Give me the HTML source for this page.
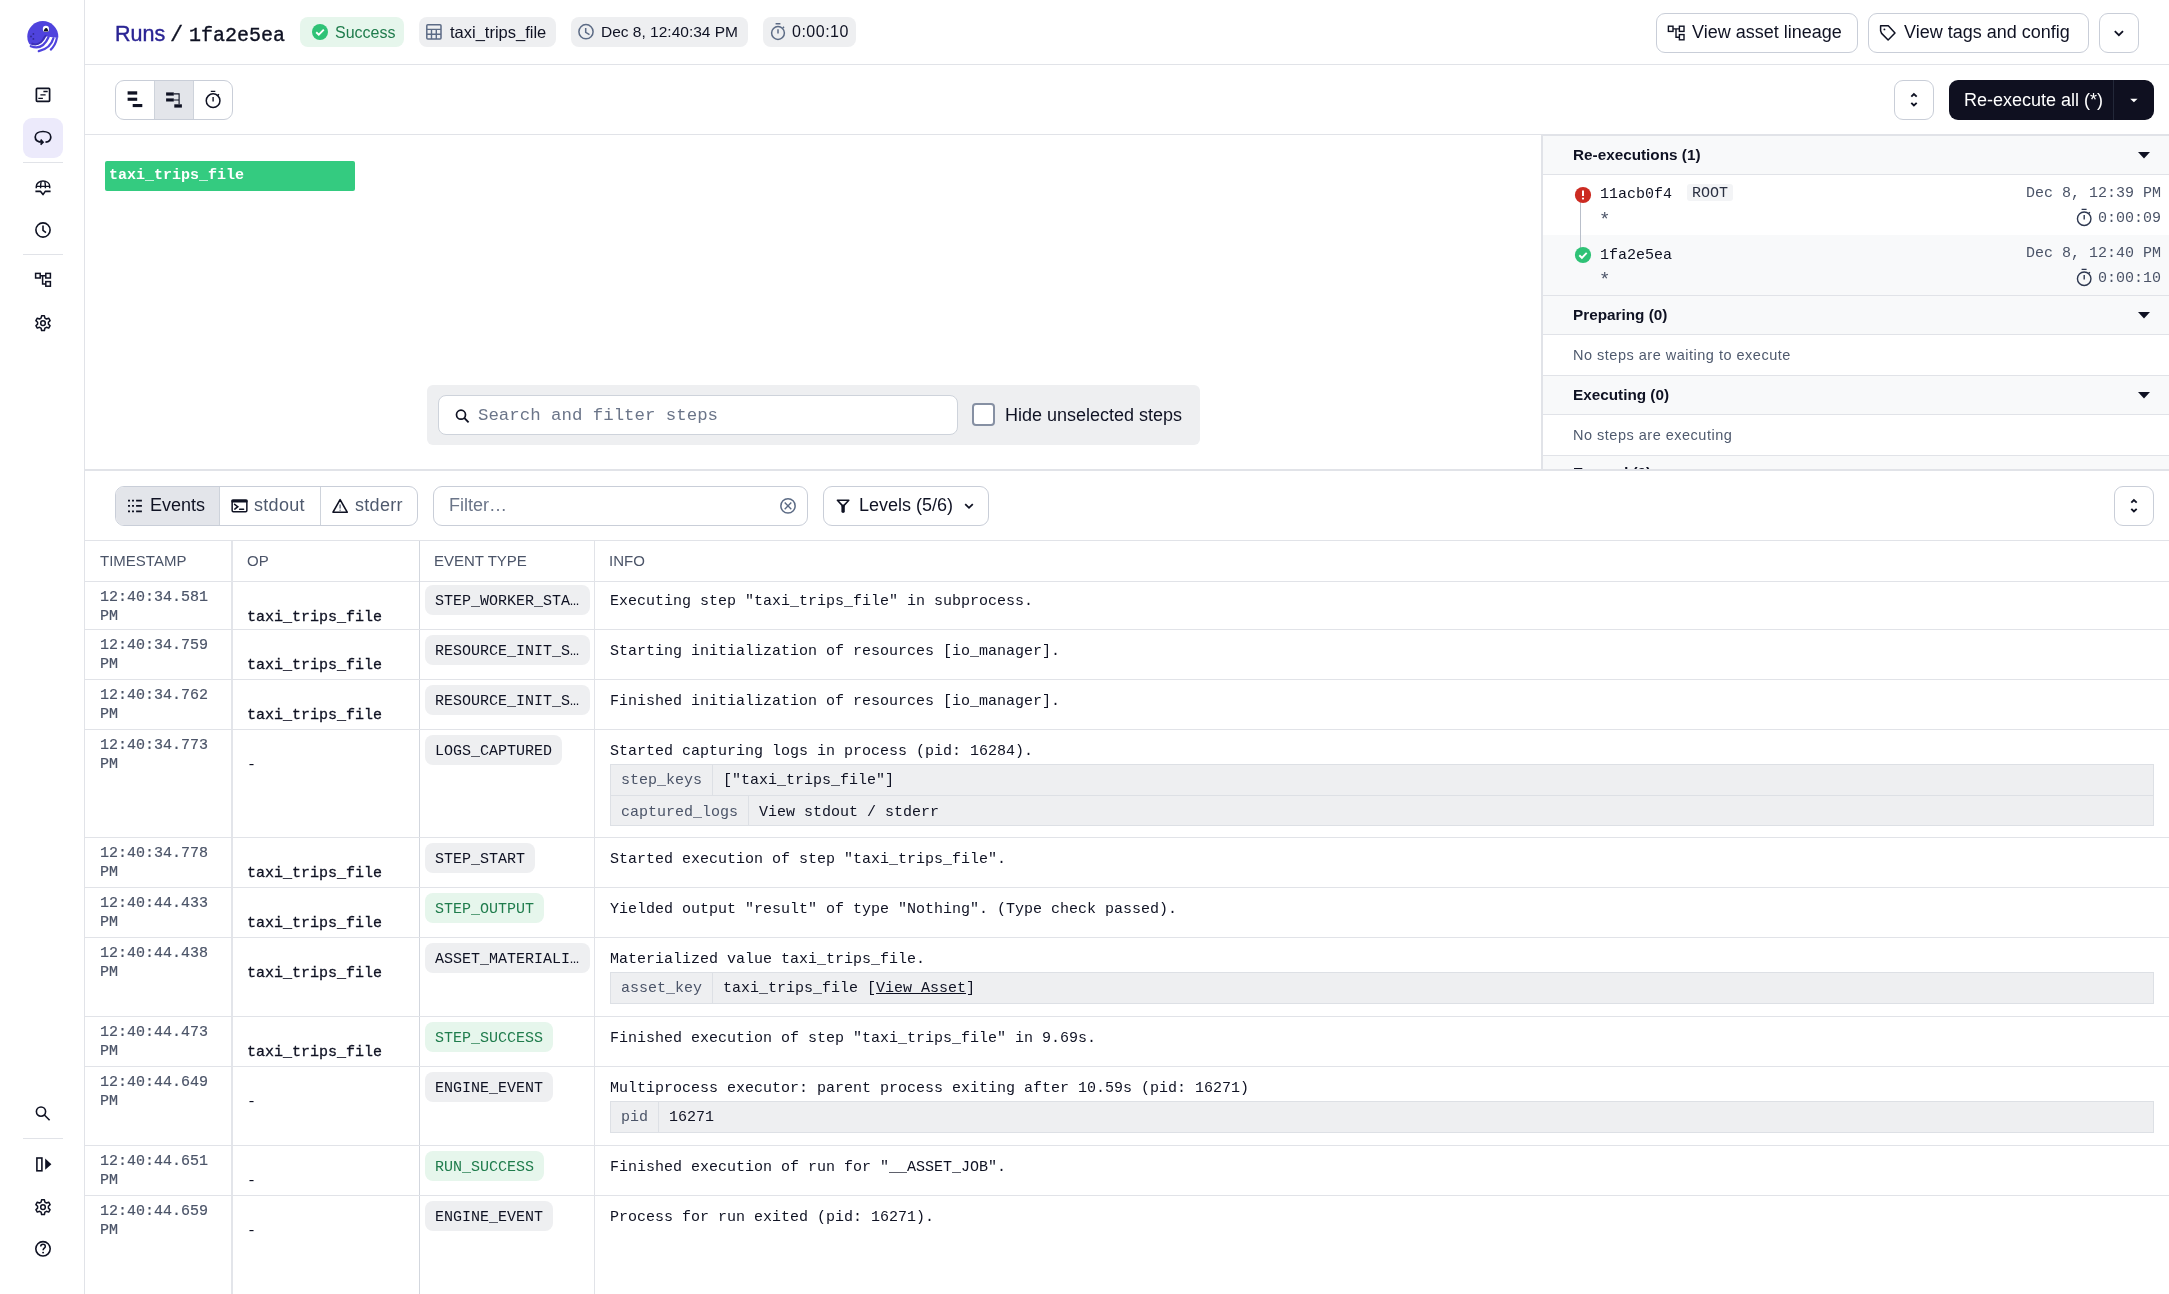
<!DOCTYPE html>
<html><head><meta charset="utf-8"><style>
*{box-sizing:border-box;margin:0;padding:0}
html,body{width:2169px;height:1294px;overflow:hidden;background:#fff;-webkit-font-smoothing:antialiased;font-family:"Liberation Sans",sans-serif;color:#0F1223}
#root{position:absolute;left:0;top:0;width:2169px;height:1294px;overflow:hidden;background:#fff;will-change:transform}
.abs{position:absolute}
.txt{position:absolute;white-space:nowrap}
.mono{font-family:"Liberation Mono",monospace}
.ic{position:absolute;display:block;overflow:visible}
#nav{position:absolute;left:0;top:0;width:85px;height:1294px;border-right:1px solid #E1E3E8;background:#fff}
.navdiv{position:absolute;left:23px;width:40px;height:1px;background:#E1E3E8}
.chip{position:absolute;top:17px;height:30px;border-radius:8px;background:#EEEFF1}
.btn{position:absolute;height:40px;border:1px solid #C9CED8;border-radius:9px;background:#fff}
.tag{position:absolute;left:425px;height:30px;max-width:165px;border-radius:8px;padding:3px 10px 0 10px;font-size:15px;line-height:27px;white-space:nowrap;overflow:hidden;text-overflow:ellipsis}
.meta{position:absolute;left:610px;width:1544px;background:#EEEFF1;border:1px solid #DDE0E5}
.mrow{display:flex;height:30px;border-top:1px solid #DDE0E5}
.mrow:first-child{border-top:none;height:30px}
.mrow+.mrow .mk,.mrow+.mrow .mv{padding-top:2px}
.mk{font-family:"Liberation Mono",monospace;font-size:15px;line-height:30px;padding:1px 10px 0 10px;color:#4B5468;border-right:1px solid #DDE0E5;white-space:nowrap}
.mv{font-family:"Liberation Mono",monospace;font-size:15px;line-height:30px;padding:1px 10px 0 10px;color:#0F1223;white-space:nowrap}
</style></head><body><div id="root">
<div id="nav">
<div class="abs" style="left:22px;top:16px;width:42px;height:42px"><svg width="42" height="42" viewBox="0 0 42 42">
      <circle cx="20.8" cy="20.6" r="15.5" fill="#4F43DD"/>
      <path d="M9.5 27.6 Q17.5 31 21.8 22.5 Q22.8 20 24.6 19.6" fill="none" stroke="#3A2FB8" stroke-width="2.2"/>
      <path d="M0 26 L8.2 28.4 Q18.5 32.6 24.3 20.6 Q30 21.5 37 22 L42 22 L42 42 L0 42 Z" fill="#fff"/>
      <path d="M8.8 30.2 Q20.5 34.8 26.5 21.3" fill="none" stroke="#4F43DD" stroke-width="2.3" stroke-linecap="round"/>
      <path d="M16.8 35.2 Q28.5 32.6 31.4 22.3" fill="none" stroke="#4F43DD" stroke-width="2.3" stroke-linecap="round"/>
      <path d="M28.8 33.6 Q33.6 29 34.8 22.4" fill="none" stroke="#4F43DD" stroke-width="2.2" stroke-linecap="round"/>
      <ellipse cx="23.9" cy="12.9" rx="3.1" ry="3.2" fill="#fff"/>
      <path d="M21.6 15.6 Q22.4 11.8 24.2 11.9 Q25.9 12.1 26.2 15.4 Z" fill="#0F1223"/>
      <circle cx="11.4" cy="17.9" r="0.9" fill="#2E2790"/>
      <circle cx="9" cy="20.5" r="0.9" fill="#2E2790"/>
      <circle cx="11.4" cy="22.9" r="0.9" fill="#2E2790"/>
    </svg></div>
<svg class="ic" style="left:34px;top:86px" width="18" height="18" viewBox="0 0 18 18" ><rect x="2.4" y="2.4" width="13.2" height="13" rx="0.8" fill="none" stroke="#0F1223" stroke-width="1.7"/><path d="M9.4 5.5H13.7M6.4 8.9H11.6M4.3 12.4H8.9" stroke="#0F1223" stroke-width="1.3"/></svg>
<div class="abs" style="left:23px;top:118px;width:40px;height:40px;border-radius:9px;background:#ECEAFB"></div>
<svg class="ic" style="left:33px;top:128px" width="20" height="18" viewBox="0 0 20 18" ><path d="M9.8 14.2 C4.5 14 2.2 11.6 2.2 8.9 C2.2 5.6 5.6 3.5 10 3.5 C14.4 3.5 17.8 5.6 17.8 8.9 C17.8 11.8 15.6 13.9 12.5 14.2" fill="none" stroke="#0F1223" stroke-width="1.7"/><path d="M7.6 11.6 L10 14.2 L7.6 16.6" fill="none" stroke="#0F1223" stroke-width="1.7"/></svg>
<div class="navdiv" style="top:162px"></div>
<svg class="ic" style="left:30px;top:176px" width="26" height="24" viewBox="0 0 26 24" ><path d="M6.3 12.2 V10.4 C6.3 7.2 9.3 5.1 13 5.1 C16.7 5.1 19.7 7.2 19.7 10.4 V12.2" fill="none" stroke="#0F1223" stroke-width="1.5"/><path d="M6.3 10.4 H19.7 M11.2 5.4 C10.6 7.2 10.6 9 10.6 12.2 M14.8 5.4 C15.4 7.2 15.4 9 15.4 12.2" fill="none" stroke="#0F1223" stroke-width="1.4"/><path d="M5.4 15.4 H10.6 L13 18.6 L15.2 15.4 H20.6" fill="none" stroke="#0F1223" stroke-width="1.6" stroke-linejoin="round"/></svg>
<svg class="ic" style="left:33px;top:220px" width="20" height="20" viewBox="0 0 20 20" ><circle cx="10" cy="10" r="7.1" fill="none" stroke="#0F1223" stroke-width="1.6"/><path d="M10 5.6 V10.4 L13 12.6" fill="none" stroke="#0F1223" stroke-width="1.6"/></svg>
<div class="navdiv" style="top:254px"></div>
<svg class="ic" style="left:33px;top:270px" width="20" height="20" viewBox="0 0 20 20" ><rect x="2.6" y="3.4" width="4.6" height="4.6" fill="none" stroke="#0F1223" stroke-width="1.5"/><rect x="12.8" y="3.4" width="4.6" height="4.6" fill="none" stroke="#0F1223" stroke-width="1.5"/><rect x="12.8" y="11.6" width="4.6" height="4.6" fill="none" stroke="#0F1223" stroke-width="1.5"/><path d="M7.2 5.7 H12.8 M9.6 5.7 V13.9 H12.8" fill="none" stroke="#0F1223" stroke-width="1.5"/></svg>
<svg class="ic" style="left:33px;top:314px" width="20" height="18" viewBox="0 0 20 18" ><path d="M8.6 1.8 H11.4 L11.9 4.1 L13.5 5 L15.7 4.2 L17.1 6.6 L15.4 8.2 V10.1 L17.1 11.7 L15.7 14.1 L13.5 13.3 L11.9 14.2 L11.4 16.5 H8.6 L8.1 14.2 L6.5 13.3 L4.3 14.1 L2.9 11.7 L4.6 10.1 V8.2 L2.9 6.6 L4.3 4.2 L6.5 5 L8.1 4.1 Z" fill="none" stroke="#0F1223" stroke-width="1.5" stroke-linejoin="round"/><circle cx="10" cy="9.15" r="2.3" fill="none" stroke="#0F1223" stroke-width="1.5"/></svg>
<svg class="ic" style="left:33px;top:1103px" width="20" height="20" viewBox="0 0 20 20" ><circle cx="8" cy="8.6" r="4.6" fill="none" stroke="#0F1223" stroke-width="1.6"/><path d="M11.4 12 L16.6 17.2" stroke="#0F1223" stroke-width="1.6"/></svg>
<div class="navdiv" style="top:1138px"></div>
<svg class="ic" style="left:33px;top:1154px" width="20" height="20" viewBox="0 0 20 20" ><rect x="3.9" y="4" width="5" height="12.8" fill="none" stroke="#0F1223" stroke-width="1.6"/><path d="M12.2 4.6 L18.4 10.2 L12.2 15.8 Z" fill="#0F1223"/></svg>
<svg class="ic" style="left:33px;top:1198px" width="20" height="18" viewBox="0 0 20 18" ><path d="M8.6 1.8 H11.4 L11.9 4.1 L13.5 5 L15.7 4.2 L17.1 6.6 L15.4 8.2 V10.1 L17.1 11.7 L15.7 14.1 L13.5 13.3 L11.9 14.2 L11.4 16.5 H8.6 L8.1 14.2 L6.5 13.3 L4.3 14.1 L2.9 11.7 L4.6 10.1 V8.2 L2.9 6.6 L4.3 4.2 L6.5 5 L8.1 4.1 Z" fill="none" stroke="#0F1223" stroke-width="1.5" stroke-linejoin="round"/><circle cx="10" cy="9.15" r="2.3" fill="none" stroke="#0F1223" stroke-width="1.5"/></svg>
<svg class="ic" style="left:33px;top:1239px" width="20" height="20" viewBox="0 0 20 20" ><circle cx="10" cy="9.8" r="7.2" fill="none" stroke="#0F1223" stroke-width="1.6"/><path d="M7.7 7.6 C7.7 6.1 8.8 5.3 10 5.3 C11.3 5.3 12.3 6.1 12.3 7.4 C12.3 9.1 10.1 9.2 10.1 11.2" fill="none" stroke="#0F1223" stroke-width="1.5"/><circle cx="10.1" cy="13.6" r="0.95" fill="#0F1223"/></svg>
</div>
<div class="abs" style="left:85px;top:64px;width:2084px;height:1px;background:#E1E3E8"></div>
<div class="txt" style="left:115px;top:21px;font-size:21.5px;line-height:26px;color:#2A2494;-webkit-text-stroke:0.4px #2A2494">Runs</div>
<div class="txt mono" style="left:170px;top:23px;font-size:22px;line-height:26px;color:#0F1223;-webkit-text-stroke:0.3px #0F1223">/</div>
<div class="txt mono" style="left:189px;top:23px;font-size:20px;line-height:26px;color:#0F1223;-webkit-text-stroke:0.35px #0F1223">1fa2e5ea</div>
<div class="chip" style="left:300px;width:104px;background:#E6F6EC"></div>
<svg class="ic" style="left:311px;top:23px" width="18" height="18" viewBox="0 0 18 18" ><circle cx="9" cy="9" r="8" fill="#2FC276"/><path d="M5.2 9.2 L7.8 11.7 L12.8 6.6" fill="none" stroke="#fff" stroke-width="1.9"/></svg>
<div class="txt" style="left:335px;top:24px;font-size:16px;line-height:18px;color:#1F7C4C">Success</div>
<div class="chip" style="left:419px;width:137px"></div>
<svg class="ic" style="left:424px;top:22px" width="20" height="20" viewBox="0 0 20 20" ><rect x="2.8" y="2.8" width="14.2" height="14.2" rx="1" fill="none" stroke="#5C6B85" stroke-width="1.5"/><path d="M2.8 7.4 H17 M2.8 12.3 H17 M7.5 7.4 V17 M12.3 7.4 V17" stroke="#5C6B85" stroke-width="1.4"/></svg>
<div class="txt" style="left:450px;top:23px;font-size:16.5px;line-height:18px;color:#0F1223">taxi_trips_file</div>
<div class="chip" style="left:571px;width:177px"></div>
<svg class="ic" style="left:576px;top:22px" width="20" height="20" viewBox="0 0 20 20" ><circle cx="10" cy="9.7" r="7.1" fill="none" stroke="#5C6B85" stroke-width="1.5"/><path d="M9.7 6 V10.3 L13.5 12.6" fill="none" stroke="#5C6B85" stroke-width="1.5"/></svg>
<div class="txt" style="left:601px;top:23px;font-size:15.5px;line-height:18px;color:#0F1223">Dec 8, 12:40:34 PM</div>
<div class="chip" style="left:763px;width:93px"></div>
<svg class="ic" style="left:768px;top:22px" width="20" height="20" viewBox="0 0 20 20" ><circle cx="10" cy="11" r="6.4" fill="none" stroke="#5C6B85" stroke-width="1.5"/><path d="M7.6 1.7 H12.4 M10 7.2 V11.6 M14.8 6 L16 4.8" fill="none" stroke="#5C6B85" stroke-width="1.5"/></svg>
<div class="txt" style="left:792px;top:23px;font-size:16px;line-height:18px;color:#0F1223;letter-spacing:0.5px">0:00:10</div>
<div class="btn" style="left:1656px;top:13px;width:202px"></div>
<svg class="ic" style="left:1666px;top:23px" width="20" height="20" viewBox="0 0 20 20" ><rect x="2.4" y="3.2" width="4.6" height="5.2" fill="none" stroke="#0F1223" stroke-width="1.4"/><rect x="13.4" y="3.2" width="4.6" height="5.2" fill="none" stroke="#0F1223" stroke-width="1.4"/><rect x="13.4" y="11.6" width="4.6" height="5.2" fill="none" stroke="#0F1223" stroke-width="1.4"/><path d="M7 5.9 H13.4 M10 5.9 V14.2 H13.4" fill="none" stroke="#0F1223" stroke-width="1.4"/></svg>
<div class="txt" style="left:1692px;top:21px;font-size:18px;line-height:22px;color:#0F1223">View asset lineage</div>
<div class="btn" style="left:1868px;top:13px;width:221px"></div>
<svg class="ic" style="left:1878px;top:23px" width="20" height="20" viewBox="0 0 20 20" ><path d="M2.6 2.7 H10.3 L17 9.9 L10.1 17 L3.6 10.4 L2.6 7.8 Z" fill="none" stroke="#0F1223" stroke-width="1.5" stroke-linejoin="round"/><circle cx="6.4" cy="6.4" r="0.95" fill="#0F1223"/></svg>
<div class="txt" style="left:1904px;top:21px;font-size:18px;line-height:22px;color:#0F1223">View tags and config</div>
<div class="btn" style="left:2099px;top:13px;width:40px"></div>
<svg class="ic" style="left:2109px;top:23px" width="20" height="20" viewBox="0 0 20 20" ><path d="M5.8 8.2 L9.9 12.2 L14 8.2" fill="none" stroke="#0F1223" stroke-width="1.8"/></svg>
<div class="abs" style="left:85px;top:134px;width:2084px;height:1px;background:#E1E3E8"></div>
<div class="btn" style="left:115px;top:80px;width:118px;overflow:hidden"><div style="position:absolute;left:38px;top:0;width:40px;height:38px;background:#E3E5EA;border-left:1px solid #CED3DB;border-right:1px solid #CED3DB"></div></div>
<svg class="ic" style="left:120px;top:85px" width="110" height="30" viewBox="0 0 110 30" ><rect x="7.6" y="6.3" width="9.6" height="3.3" fill="#0F1223"/><rect x="7.6" y="12.7" width="9.6" height="3.1" fill="#0F1223"/><rect x="12.7" y="19" width="9.6" height="3.1" fill="#0F1223"/><rect x="46.1" y="7.4" width="7.7" height="3.2" fill="#0F1223"/><rect x="46.1" y="13.4" width="7.7" height="3.1" fill="#0F1223"/><rect x="54.3" y="19.3" width="7.6" height="3.3" fill="#0F1223"/><path d="M53.8 8.9 H59.1 V19.3 M53.8 15 H59.1" fill="none" stroke="#0F1223" stroke-width="1.1"/><circle cx="93.1" cy="15.7" r="6.85" fill="none" stroke="#0F1223" stroke-width="1.5"/><path d="M90.8 6.4 H95.3 M93.1 12.1 V16.6 M97.4 10.8 L98.9 9.3" fill="none" stroke="#0F1223" stroke-width="1.4"/></svg>
<div class="btn" style="left:1894px;top:80px;width:40px"></div>
<svg class="ic" style="left:1904px;top:90px" width="20" height="20" viewBox="0 0 20 20" ><path d="M7.3 6.6 L9.9 4.0 L12.7 6.6 M7.3 12.9 L9.9 15.5 L12.7 12.9" fill="none" stroke="#0F1223" stroke-width="1.9"/></svg>
<div class="abs" style="left:1949px;top:80px;width:205px;height:40px;border-radius:9px;background:#0F1020"></div>
<div class="abs" style="left:2113px;top:80px;width:1px;height:40px;background:#232839"></div>
<div class="txt" style="left:1964px;top:89px;font-size:18px;line-height:22px;color:#fff">Re-execute all (*)</div>
<svg class="ic" style="left:2124px;top:90px" width="20" height="20" viewBox="0 0 20 20" ><path d="M6.2 8.8 H13.6 L9.9 12.3 Z" fill="#fff"/></svg>
<div class="abs mono" style="left:105px;top:161px;width:250px;height:30px;border-radius:2px;background:#34CB80;color:#fff;font-weight:bold;font-size:15px;line-height:30px;padding-left:4px;white-space:nowrap">taxi_trips_file</div>
<div class="abs" style="left:427px;top:385px;width:773px;height:60px;border-radius:6px;background:#EEEFF1"></div>
<div class="abs" style="left:438px;top:395px;width:520px;height:40px;border-radius:8px;background:#fff;border:1px solid #CED3DB"></div>
<svg class="ic" style="left:452px;top:406px" width="20" height="20" viewBox="0 0 20 20" ><circle cx="9" cy="8.7" r="4.5" fill="none" stroke="#0F1223" stroke-width="1.7"/><path d="M12.2 11.9 L16.6 16.3" stroke="#0F1223" stroke-width="1.9"/></svg>
<div class="txt mono" style="left:478px;top:405px;font-size:17.4px;line-height:22px;color:#6B7589">Search and filter steps</div>
<div class="abs" style="left:972px;top:403px;width:23px;height:23px;border-radius:4px;border:2px solid #8690A3;background:#fff"></div>
<div class="txt" style="left:1005px;top:404px;font-size:18px;line-height:22px;color:#0F1223">Hide unselected steps</div>
<div class="abs" style="left:85px;top:469px;width:2084px;height:2px;background:#E1E3E8"></div>
<div class="abs" style="left:1541px;top:135px;width:628px;height:334px;background:#fff;overflow:hidden">
<div class="abs" style="left:0;top:0;width:2px;height:334px;background:#E1E3E8"></div>
<div class="abs" style="left:2px;top:0;width:626px;height:1px;background:#E1E3E8"></div>
<div class="abs" style="left:2px;top:1px;width:626px;height:39px;background:#F8F9FA;border-bottom:1px solid #E1E3E8"></div>
<div class="txt" style="left:32px;top:11px;font-size:15.3px;line-height:18px;font-weight:bold;color:#0F1223">Re-executions (1)</div>
<svg class="ic" style="left:590px;top:11px" width="20" height="20" viewBox="0 0 20 20" ><path d="M7 6.1 H19 L13 12.6 Z" fill="#0F1223"/></svg>
<div class="abs" style="left:2px;top:100px;width:626px;height:61px;background:#F8F9FA;border-bottom:1px solid #E1E3E8"></div>
<div class="abs" style="left:39px;top:60px;width:1px;height:60px;background:#B9BFCA"></div>
<svg class="ic" style="left:33px;top:51px" width="18" height="18" viewBox="0 0 18 18" ><circle cx="9" cy="9" r="8.1" fill="#CC2B22"/><path d="M9 4.4 V10" stroke="#fff" stroke-width="2"/><circle cx="9" cy="12.6" r="1.1" fill="#fff"/></svg>
<svg class="ic" style="left:33px;top:111px" width="18" height="18" viewBox="0 0 18 18" ><circle cx="9" cy="9" r="8.1" fill="#2FC276"/><path d="M5.3 9.3 L7.9 11.8 L12.7 6.8" fill="none" stroke="#fff" stroke-width="1.9"/></svg>
<div class="txt mono" style="left:59px;top:51px;font-size:15px;line-height:18px;color:#0F1223">11acb0f4</div>
<div class="abs mono" style="left:146px;top:49px;width:46px;height:17px;border-radius:3px;background:#F3F4F6;font-size:15px;line-height:17px;color:#2A3042;padding-left:5px;padding-top:1px">ROOT</div>
<div class="txt mono" style="left:58px;top:76px;font-size:19px;line-height:18px;color:#4B5468">*</div>
<div class="txt mono" style="right:8px;top:50px;font-size:15px;line-height:18px;color:#4B5468">Dec 8, 12:39 PM</div>
<svg class="ic" style="left:533px;top:73px" width="20" height="20" viewBox="0 0 20 20" ><circle cx="10.2" cy="10.7" r="6.75" fill="none" stroke="#2E3850" stroke-width="1.4"/><path d="M7.6 1.4 H12.6 M10.2 7 V11.6 M14.5 5.6 L15.9 4.2" fill="none" stroke="#2E3850" stroke-width="1.4"/></svg>
<div class="txt mono" style="right:8px;top:75px;font-size:15px;line-height:18px;color:#4B5468">0:00:09</div>
<div class="txt mono" style="left:59px;top:112px;font-size:15px;line-height:18px;color:#0F1223">1fa2e5ea</div>
<div class="txt mono" style="left:58px;top:136px;font-size:19px;line-height:18px;color:#4B5468">*</div>
<div class="txt mono" style="right:8px;top:110px;font-size:15px;line-height:18px;color:#4B5468">Dec 8, 12:40 PM</div>
<svg class="ic" style="left:533px;top:133px" width="20" height="20" viewBox="0 0 20 20" ><circle cx="10.2" cy="10.7" r="6.75" fill="none" stroke="#2E3850" stroke-width="1.4"/><path d="M7.6 1.4 H12.6 M10.2 7 V11.6 M14.5 5.6 L15.9 4.2" fill="none" stroke="#2E3850" stroke-width="1.4"/></svg>
<div class="txt mono" style="right:8px;top:135px;font-size:15px;line-height:18px;color:#4B5468">0:00:10</div>
<div class="abs" style="left:2px;top:161px;width:626px;height:39px;background:#F8F9FA;border-bottom:1px solid #E1E3E8"></div>
<div class="txt" style="left:32px;top:171px;font-size:15.3px;line-height:18px;font-weight:bold;color:#0F1223">Preparing (0)</div>
<svg class="ic" style="left:590px;top:171px" width="20" height="20" viewBox="0 0 20 20" ><path d="M7 6.1 H19 L13 12.6 Z" fill="#0F1223"/></svg>
<div class="abs" style="left:2px;top:200px;width:626px;height:41px;border-bottom:1px solid #E1E3E8"></div>
<div class="txt" style="left:32px;top:211px;font-size:14.5px;letter-spacing:0.5px;line-height:18px;color:#4F5A6E">No steps are waiting to execute</div>
<div class="abs" style="left:2px;top:241px;width:626px;height:39px;background:#F8F9FA;border-bottom:1px solid #E1E3E8"></div>
<div class="txt" style="left:32px;top:251px;font-size:15.3px;line-height:18px;font-weight:bold;color:#0F1223">Executing (0)</div>
<svg class="ic" style="left:590px;top:251px" width="20" height="20" viewBox="0 0 20 20" ><path d="M7 6.1 H19 L13 12.6 Z" fill="#0F1223"/></svg>
<div class="abs" style="left:2px;top:280px;width:626px;height:41px;border-bottom:1px solid #E1E3E8"></div>
<div class="txt" style="left:32px;top:291px;font-size:14.5px;letter-spacing:0.5px;line-height:18px;color:#4F5A6E">No steps are executing</div>
<div class="abs" style="left:2px;top:321px;width:626px;height:39px;background:#F8F9FA;border-bottom:1px solid #E1E3E8"></div>
<div class="txt" style="left:32px;top:329px;font-size:15.3px;line-height:18px;font-weight:bold;color:#0F1223">Errored (0)</div>
<svg class="ic" style="left:590px;top:331px" width="20" height="20" viewBox="0 0 20 20" ><path d="M7 6.1 H19 L13 12.6 Z" fill="#0F1223"/></svg>
</div>
<div class="btn" style="left:115px;top:486px;width:303px;overflow:hidden"><div style="position:absolute;left:0;top:0;width:104px;height:38px;background:#E3E5EA;border-right:1px solid #CED3DB"></div><div style="position:absolute;left:204px;top:0;width:1px;height:38px;background:#CED3DB"></div></div>
<svg class="ic" style="left:125px;top:496px" width="20" height="20" viewBox="0 0 20 20" ><path d="M3 4.7 H5 M7 4.7 H9 M11.1 4.7 H16.9 M3 9.9 H5 M7 9.9 H9 M11.1 9.9 H16.9 M3 15.3 H5 M7 15.3 H9 M11.1 15.3 H16.9" stroke="#0F1223" stroke-width="1.8"/></svg>
<div class="txt" style="left:150px;top:494px;font-size:18px;line-height:22px;color:#0F1223">Events</div>
<svg class="ic" style="left:229px;top:496px" width="20" height="20" viewBox="0 0 20 20" ><rect x="3.15" y="4.35" width="14.7" height="11.4" rx="1.2" fill="none" stroke="#0F1223" stroke-width="1.5"/><rect x="2.4" y="3.6" width="16.2" height="2.9" rx="0.8" fill="#0F1223"/><path d="M5.6 8.3 L8.8 10.7 L5.8 13.1 M10.6 13.3 H14.6" fill="none" stroke="#0F1223" stroke-width="1.5" stroke-linecap="round"/></svg>
<div class="txt" style="left:254px;top:494px;font-size:18px;line-height:22px;color:#4F5A6E;letter-spacing:0.3px">stdout</div>
<svg class="ic" style="left:326px;top:492px" width="30" height="26" viewBox="0 0 30 26" ><path d="M14.1 7.6 L21.2 20.2 H7 Z" fill="none" stroke="#0F1223" stroke-width="1.6" stroke-linejoin="round"/><path d="M14.1 12.5 V16.6" stroke="#5C6475" stroke-width="1.4"/><circle cx="14.1" cy="18.2" r="0.7" fill="#5C6475"/></svg>
<div class="txt" style="left:355px;top:494px;font-size:18px;line-height:22px;color:#4F5A6E;letter-spacing:0.3px">stderr</div>
<div class="btn" style="left:433px;top:486px;width:375px"></div>
<div class="txt" style="left:449px;top:494px;font-size:18px;line-height:22px;color:#6B7589">Filter…</div>
<svg class="ic" style="left:778px;top:496px" width="20" height="20" viewBox="0 0 20 20" ><circle cx="10" cy="9.9" r="7.15" fill="none" stroke="#5C6B85" stroke-width="1.5"/><path d="M6.7 6.6 L13.3 13.2 M13.3 6.6 L6.7 13.2" stroke="#5C6B85" stroke-width="1.4"/></svg>
<div class="btn" style="left:823px;top:486px;width:166px"></div>
<svg class="ic" style="left:833px;top:496px" width="20" height="20" viewBox="0 0 20 20" ><path d="M4.4 4.3 H15.8 L10.1 10.4 Z" fill="none" stroke="#0F1223" stroke-width="1.6" stroke-linejoin="round"/><path d="M10.1 10.2 V15.2" stroke="#0F1223" stroke-width="3.4" stroke-linecap="round"/></svg>
<div class="txt" style="left:859px;top:494px;font-size:18px;line-height:22px;color:#0F1223">Levels (5/6)</div>
<svg class="ic" style="left:959px;top:496px" width="20" height="20" viewBox="0 0 20 20" ><path d="M6.2 8.2 L10 11.8 L13.8 8.2" fill="none" stroke="#0F1223" stroke-width="1.8"/></svg>
<div class="btn" style="left:2114px;top:486px;width:40px"></div>
<svg class="ic" style="left:2124px;top:496px" width="20" height="20" viewBox="0 0 20 20" ><path d="M7.3 6.6 L9.9 4.0 L12.7 6.6 M7.3 12.9 L9.9 15.5 L12.7 12.9" fill="none" stroke="#0F1223" stroke-width="1.9"/></svg>
<div class="abs" style="left:85px;top:540px;width:2084px;height:1px;background:#E1E3E8"></div>
<div class="abs" style="left:85px;top:581px;width:2084px;height:1px;background:#E1E3E8"></div>
<div class="abs" style="left:231px;top:541px;width:2px;height:753px;background:#E3E5EA"></div>
<div class="abs" style="left:419px;top:541px;width:1px;height:753px;background:#D3D7DE"></div>
<div class="abs" style="left:594px;top:541px;width:1px;height:753px;background:#E1E3E8"></div>
<div class="txt" style="left:100px;top:552px;font-size:15px;line-height:18px;color:#4B5468">TIMESTAMP</div>
<div class="txt" style="left:247px;top:552px;font-size:15px;line-height:18px;color:#4B5468">OP</div>
<div class="txt" style="left:434px;top:552px;font-size:15px;line-height:18px;color:#4B5468">EVENT TYPE</div>
<div class="txt" style="left:609px;top:552px;font-size:15px;line-height:18px;color:#4B5468">INFO</div>
<div class="abs" style="left:85px;top:629px;width:2084px;height:1px;background:#E1E3E8"></div>
<div class="txt mono" style="left:100px;top:588px;font-size:15px;line-height:19px;color:#4B5468;white-space:pre;-webkit-text-stroke:0.2px #4B5468">12:40:34.581
PM</div>
<div class="txt mono" style="left:247px;top:608px;font-size:15px;line-height:19px;color:#0F1223;-webkit-text-stroke:0.3px #0F1223">taxi_trips_file</div>
<div class="tag mono" style="top:585px;background:#EEEFF1;color:#0F1223">STEP_WORKER_STARTING</div>
<div class="txt mono" style="left:610px;top:592px;font-size:15px;line-height:19px;color:#0F1223">Executing step "taxi_trips_file" in subprocess.</div>
<div class="abs" style="left:85px;top:679px;width:2084px;height:1px;background:#E1E3E8"></div>
<div class="txt mono" style="left:100px;top:636px;font-size:15px;line-height:19px;color:#4B5468;white-space:pre;-webkit-text-stroke:0.2px #4B5468">12:40:34.759
PM</div>
<div class="txt mono" style="left:247px;top:656px;font-size:15px;line-height:19px;color:#0F1223;-webkit-text-stroke:0.3px #0F1223">taxi_trips_file</div>
<div class="tag mono" style="top:635px;background:#EEEFF1;color:#0F1223">RESOURCE_INIT_STARTED</div>
<div class="txt mono" style="left:610px;top:642px;font-size:15px;line-height:19px;color:#0F1223">Starting initialization of resources [io_manager].</div>
<div class="abs" style="left:85px;top:729px;width:2084px;height:1px;background:#E1E3E8"></div>
<div class="txt mono" style="left:100px;top:686px;font-size:15px;line-height:19px;color:#4B5468;white-space:pre;-webkit-text-stroke:0.2px #4B5468">12:40:34.762
PM</div>
<div class="txt mono" style="left:247px;top:706px;font-size:15px;line-height:19px;color:#0F1223;-webkit-text-stroke:0.3px #0F1223">taxi_trips_file</div>
<div class="tag mono" style="top:685px;background:#EEEFF1;color:#0F1223">RESOURCE_INIT_SUCCESS</div>
<div class="txt mono" style="left:610px;top:692px;font-size:15px;line-height:19px;color:#0F1223">Finished initialization of resources [io_manager].</div>
<div class="abs" style="left:85px;top:837px;width:2084px;height:1px;background:#E1E3E8"></div>
<div class="txt mono" style="left:100px;top:736px;font-size:15px;line-height:19px;color:#4B5468;white-space:pre;-webkit-text-stroke:0.2px #4B5468">12:40:34.773
PM</div>
<div class="txt mono" style="left:247px;top:756px;font-size:15px;line-height:19px;color:#0F1223">-</div>
<div class="tag mono" style="top:735px;background:#EEEFF1;color:#0F1223">LOGS_CAPTURED</div>
<div class="txt mono" style="left:610px;top:742px;font-size:15px;line-height:19px;color:#0F1223">Started capturing logs in process (pid: 16284).</div>
<div class="meta" style="top:764px">
<div class="mrow"><div class="mk">step_keys</div><div class="mv">["taxi_trips_file"]</div></div>
<div class="mrow"><div class="mk">captured_logs</div><div class="mv">View stdout / stderr</div></div>
</div>
<div class="abs" style="left:85px;top:887px;width:2084px;height:1px;background:#E1E3E8"></div>
<div class="txt mono" style="left:100px;top:844px;font-size:15px;line-height:19px;color:#4B5468;white-space:pre;-webkit-text-stroke:0.2px #4B5468">12:40:34.778
PM</div>
<div class="txt mono" style="left:247px;top:864px;font-size:15px;line-height:19px;color:#0F1223;-webkit-text-stroke:0.3px #0F1223">taxi_trips_file</div>
<div class="tag mono" style="top:843px;background:#EEEFF1;color:#0F1223">STEP_START</div>
<div class="txt mono" style="left:610px;top:850px;font-size:15px;line-height:19px;color:#0F1223">Started execution of step "taxi_trips_file".</div>
<div class="abs" style="left:85px;top:937px;width:2084px;height:1px;background:#E1E3E8"></div>
<div class="txt mono" style="left:100px;top:894px;font-size:15px;line-height:19px;color:#4B5468;white-space:pre;-webkit-text-stroke:0.2px #4B5468">12:40:44.433
PM</div>
<div class="txt mono" style="left:247px;top:914px;font-size:15px;line-height:19px;color:#0F1223;-webkit-text-stroke:0.3px #0F1223">taxi_trips_file</div>
<div class="tag mono" style="top:893px;background:#E6F6EC;color:#1F7C4C">STEP_OUTPUT</div>
<div class="txt mono" style="left:610px;top:900px;font-size:15px;line-height:19px;color:#0F1223">Yielded output "result" of type "Nothing". (Type check passed).</div>
<div class="abs" style="left:85px;top:1016px;width:2084px;height:1px;background:#E1E3E8"></div>
<div class="txt mono" style="left:100px;top:944px;font-size:15px;line-height:19px;color:#4B5468;white-space:pre;-webkit-text-stroke:0.2px #4B5468">12:40:44.438
PM</div>
<div class="txt mono" style="left:247px;top:964px;font-size:15px;line-height:19px;color:#0F1223;-webkit-text-stroke:0.3px #0F1223">taxi_trips_file</div>
<div class="tag mono" style="top:943px;background:#EEEFF1;color:#0F1223">ASSET_MATERIALIZATION</div>
<div class="txt mono" style="left:610px;top:950px;font-size:15px;line-height:19px;color:#0F1223">Materialized value taxi_trips_file.</div>
<div class="meta" style="top:972px">
<div class="mrow"><div class="mk">asset_key</div><div class="mv">taxi_trips_file [<u>View Asset</u>]</div></div>
</div>
<div class="abs" style="left:85px;top:1066px;width:2084px;height:1px;background:#E1E3E8"></div>
<div class="txt mono" style="left:100px;top:1023px;font-size:15px;line-height:19px;color:#4B5468;white-space:pre;-webkit-text-stroke:0.2px #4B5468">12:40:44.473
PM</div>
<div class="txt mono" style="left:247px;top:1043px;font-size:15px;line-height:19px;color:#0F1223;-webkit-text-stroke:0.3px #0F1223">taxi_trips_file</div>
<div class="tag mono" style="top:1022px;background:#E6F6EC;color:#1F7C4C">STEP_SUCCESS</div>
<div class="txt mono" style="left:610px;top:1029px;font-size:15px;line-height:19px;color:#0F1223">Finished execution of step "taxi_trips_file" in 9.69s.</div>
<div class="abs" style="left:85px;top:1145px;width:2084px;height:1px;background:#E1E3E8"></div>
<div class="txt mono" style="left:100px;top:1073px;font-size:15px;line-height:19px;color:#4B5468;white-space:pre;-webkit-text-stroke:0.2px #4B5468">12:40:44.649
PM</div>
<div class="txt mono" style="left:247px;top:1093px;font-size:15px;line-height:19px;color:#0F1223">-</div>
<div class="tag mono" style="top:1072px;background:#EEEFF1;color:#0F1223">ENGINE_EVENT</div>
<div class="txt mono" style="left:610px;top:1079px;font-size:15px;line-height:19px;color:#0F1223">Multiprocess executor: parent process exiting after 10.59s (pid: 16271)</div>
<div class="meta" style="top:1101px">
<div class="mrow"><div class="mk">pid</div><div class="mv">16271</div></div>
</div>
<div class="abs" style="left:85px;top:1195px;width:2084px;height:1px;background:#E1E3E8"></div>
<div class="txt mono" style="left:100px;top:1152px;font-size:15px;line-height:19px;color:#4B5468;white-space:pre;-webkit-text-stroke:0.2px #4B5468">12:40:44.651
PM</div>
<div class="txt mono" style="left:247px;top:1172px;font-size:15px;line-height:19px;color:#0F1223">-</div>
<div class="tag mono" style="top:1151px;background:#E6F6EC;color:#1F7C4C">RUN_SUCCESS</div>
<div class="txt mono" style="left:610px;top:1158px;font-size:15px;line-height:19px;color:#0F1223">Finished execution of run for "__ASSET_JOB".</div>
<div class="txt mono" style="left:100px;top:1202px;font-size:15px;line-height:19px;color:#4B5468;white-space:pre;-webkit-text-stroke:0.2px #4B5468">12:40:44.659
PM</div>
<div class="txt mono" style="left:247px;top:1222px;font-size:15px;line-height:19px;color:#0F1223">-</div>
<div class="tag mono" style="top:1201px;background:#EEEFF1;color:#0F1223">ENGINE_EVENT</div>
<div class="txt mono" style="left:610px;top:1208px;font-size:15px;line-height:19px;color:#0F1223">Process for run exited (pid: 16271).</div>
</div></body></html>
